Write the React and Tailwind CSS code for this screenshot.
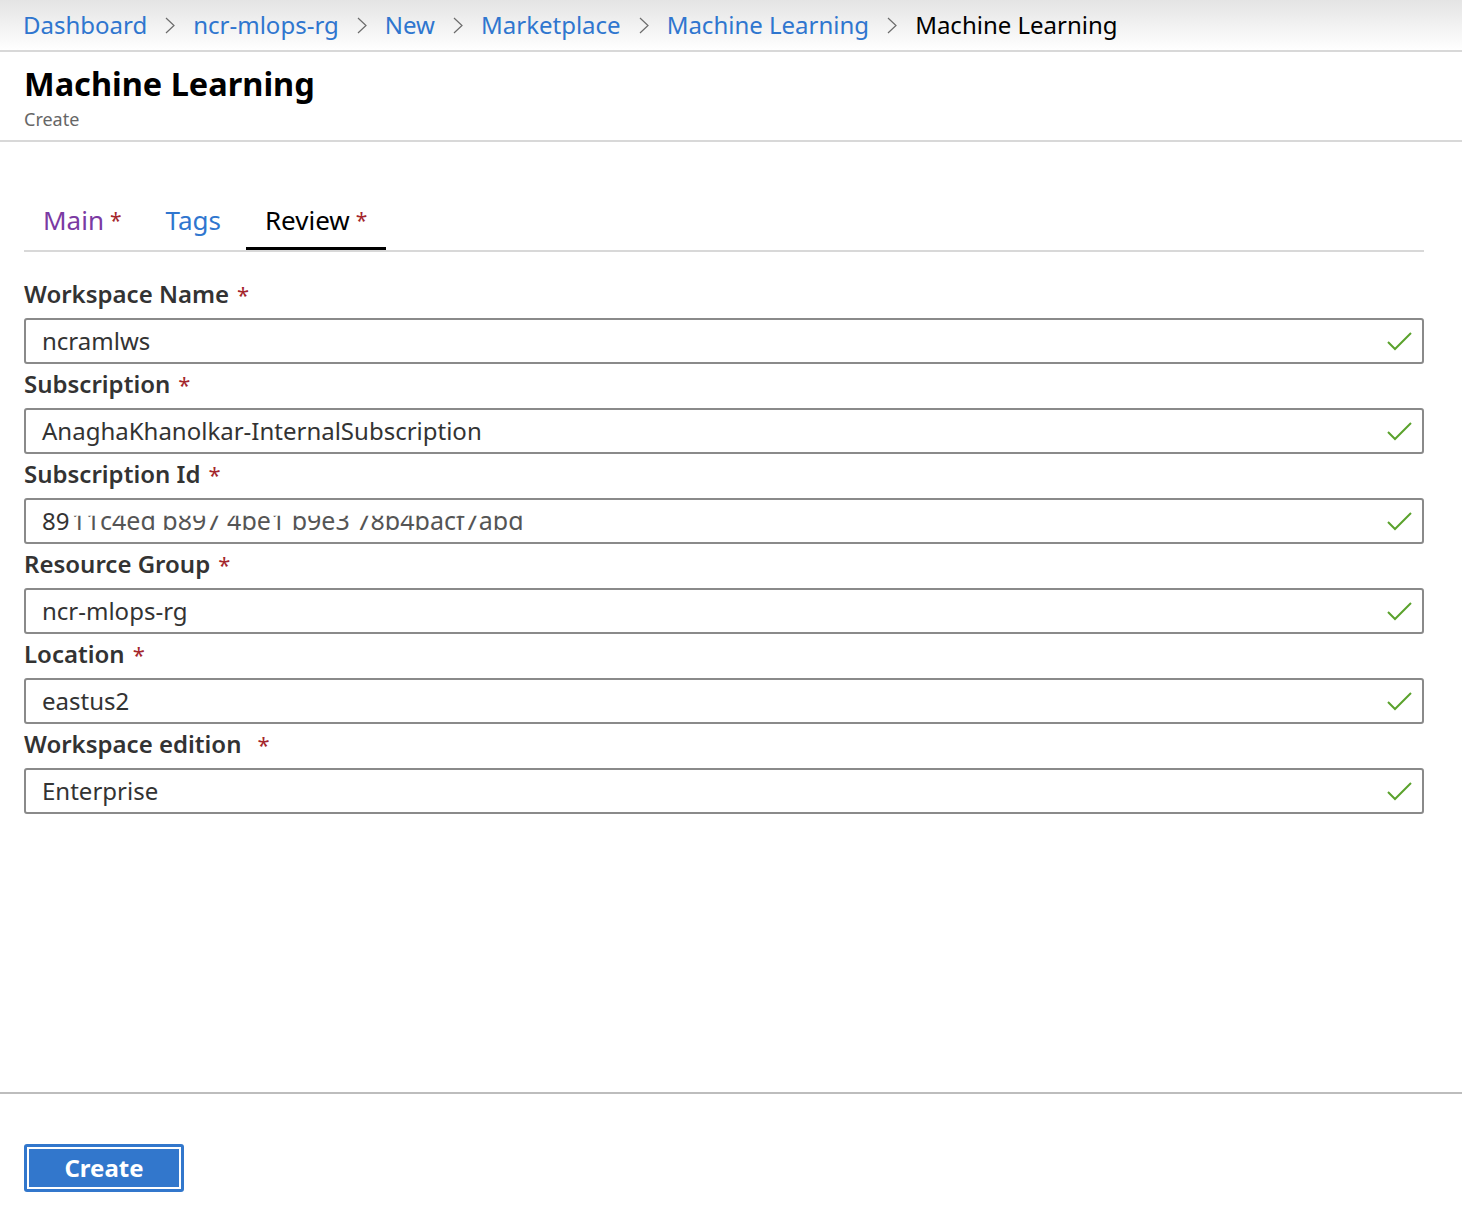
import React from "react";

const fields = [
  { label: "Workspace Name", value: "ncramlws" },
  { label: "Subscription", value: "AnaghaKhanolkar-InternalSubscription" },
  { label: "Subscription Id", value: "89", masked: "11c4ed b897 4be1 b9e3 78b4bacf7abd" },
  { label: "Resource Group", value: "ncr-mlops-rg" },
  { label: "Location", value: "eastus2" },
  { label: "Workspace edition", value: "Enterprise", wide: true },
];

const crumbs = ["Dashboard", "ncr-mlops-rg", "New", "Marketplace", "Machine Learning"];

const Chevron = () => (
  <svg width="10" height="17" viewBox="0 0 10 17" className="mx-[18px]">
    <polyline points="1,1 9,8.5 1,16" fill="none" stroke="#6b6b6b" strokeWidth="1.2" />
  </svg>
);

const Check = () => (
  <svg width="25" height="19" viewBox="0 0 25 19">
    <polyline points="1,10 8,17 24,1" fill="none" stroke="#5aa22c" strokeWidth="2" />
  </svg>
);

export default function App() {
  return (
    <div className="w-[1462px] h-[1212px] bg-white flex flex-col font-['Noto_Sans',sans-serif] text-[#333]">

      {/* BREADCRUMB */}
      <div className="h-[52px] shrink-0 bg-gradient-to-b from-[#e4e4e4] to-white border-b-2 border-[#d8d8d8] flex items-center pl-[23px] text-[24px]">
        {crumbs.map((c, i) => (
          <div key={i} className="flex items-center">
            <span className="text-[#2f76cf]">{c}</span>
            <Chevron />
          </div>
        ))}
        <span className="text-black">Machine Learning</span>
      </div>

      {/* TITLE */}
      <div className="h-[90px] shrink-0 border-b-2 border-[#d8d8d8] pl-[24px] pt-[10px]">
        <h1 className="text-[32.5px] font-bold text-black leading-[44px]">Machine Learning</h1>
        <div className="text-[18px] text-[#666] leading-[24px] mt-[1px]">Create</div>
      </div>

      {/* FORM */}
      <div className="flex-1 shrink-0 px-[24px] pr-[38px]">
        <div className="mt-[52px] border-b-2 border-[#d8d8d8] flex gap-[6px] text-[26px]">
          <div className="px-[19px] h-[56px] flex items-start pt-[7px]">
            <span className="text-[#7b3aa3]">Main</span>
            <span className="text-[#a4262c] text-[21px] ml-[6px] translate-y-[4px]">*</span>
          </div>
          <div className="px-[19px] h-[56px] flex items-start pt-[7px]">
            <span className="text-[#2f76cf]">Tags</span>
          </div>
          <div className="px-[19px] h-[56px] flex items-start pt-[7px] border-b-[3px] border-black -mb-[2px]">
            <span className="text-black">Review</span>
            <span className="text-[#a4262c] text-[21px] ml-[6px] translate-y-[4px]">*</span>
          </div>
        </div>

        <div className="mt-[22px]">
          {fields.map((f) => (
            <div key={f.label}>
              <div className="h-[44px] flex items-center text-[24px] font-semibold text-[#333]">
                <span className="-translate-y-[2px] flex items-center">
                  {f.label}
                  <span className={"text-[#a4262c] font-normal text-[22px] " + (f.wide ? "ml-[16px]" : "ml-[8px]")}>*</span>
                </span>
              </div>
              <div className="h-[46px] border-2 border-[#8a8a8a] rounded-[3px] flex items-center justify-between pl-[16px] pr-[10px] text-[24px] text-[#333]">
                <span className="flex items-center">
                  {f.value}
                  {f.masked && (
                    <span className="ml-[2px] text-[#555] text-[25px] [clip-path:inset(36%_0_0_0)]">{f.masked}</span>
                  )}
                </span>
                <Check />
              </div>
            </div>
          ))}
        </div>
      </div>

      {/* FOOTER */}
      <div className="h-[120px] shrink-0 border-t-2 border-[#bdbdbd] pl-[24px] pt-[50px]">
        <button className="w-[160px] h-[48px] bg-[#3277cc] rounded-[3px] p-[3px]">
          <div className="w-full h-full border-2 border-white flex items-center justify-center text-white text-[24px] font-bold">
            Create
          </div>
        </button>
      </div>
    </div>
  );
}
